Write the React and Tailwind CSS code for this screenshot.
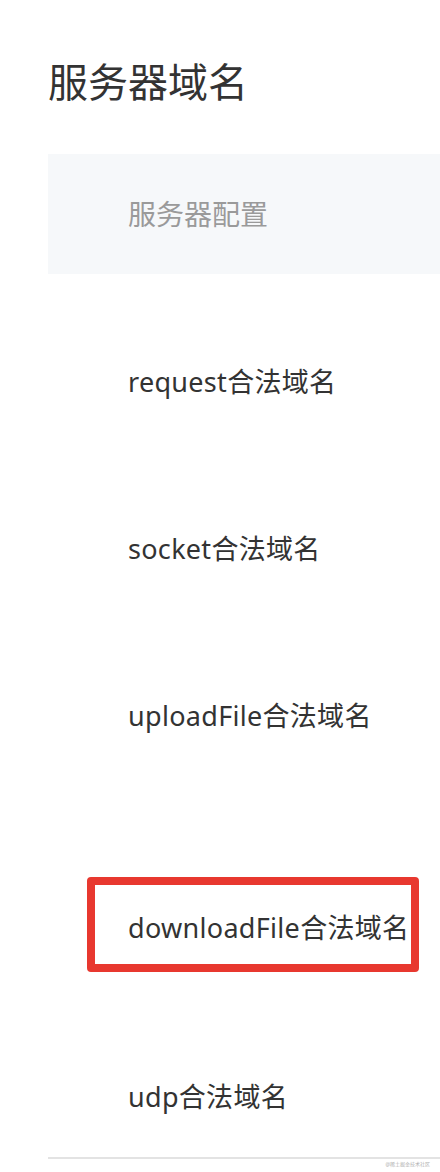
export default function App() {
  const font = { fontFamily: '"Noto Sans", "Noto Sans CJK SC", sans-serif' };
  const rows = [
    { label: "request合法域名", mt: "mt-[88px]" },
    { label: "socket合法域名", mt: "mt-[127px]" },
    { label: "uploadFile合法域名", mt: "mt-[127px]" },
    { label: "downloadFile合法域名", mt: "mt-[172px]", marked: true },
    { label: "udp合法域名", mt: "mt-[129px]" },
  ];
  return (
    <div className="relative w-[440px] h-[1172px] bg-white overflow-hidden" style={font}>
      <div className="pl-[48px] pt-[58px]">
        <h1 className="text-[40px] leading-[48px] text-[#333333] font-normal">服务器域名</h1>
        <div className="mt-[48px] h-[120px] bg-[#f6f8fa] flex items-center pl-[80px]">
          <span className="text-[28px] leading-[40px] text-[#9a9a9a]">服务器配置</span>
        </div>
        <div className="flex flex-col">
          {rows.map((r) => (
            <div key={r.label} className={`${r.mt} relative pl-[80px]`}>
              <span className="text-[27px] leading-[40px] tracking-[0.3px] text-[#333333] whitespace-nowrap">{r.label}</span>
              {r.marked && (
                <div className="absolute left-[39px] top-[-31px] w-[332px] h-[95px] border-[8px] border-[#e8382f] rounded-[4px]" />
              )}
            </div>
          ))}
        </div>
        <div className="mt-[40px] h-[2px] bg-[#e3e3e3]" />
      </div>
      <div className="absolute right-[10px] top-[1161px] text-[5px] leading-[6px] text-[#b0b0b0]">@稀土掘金技术社区</div>
    </div>
  );
}
